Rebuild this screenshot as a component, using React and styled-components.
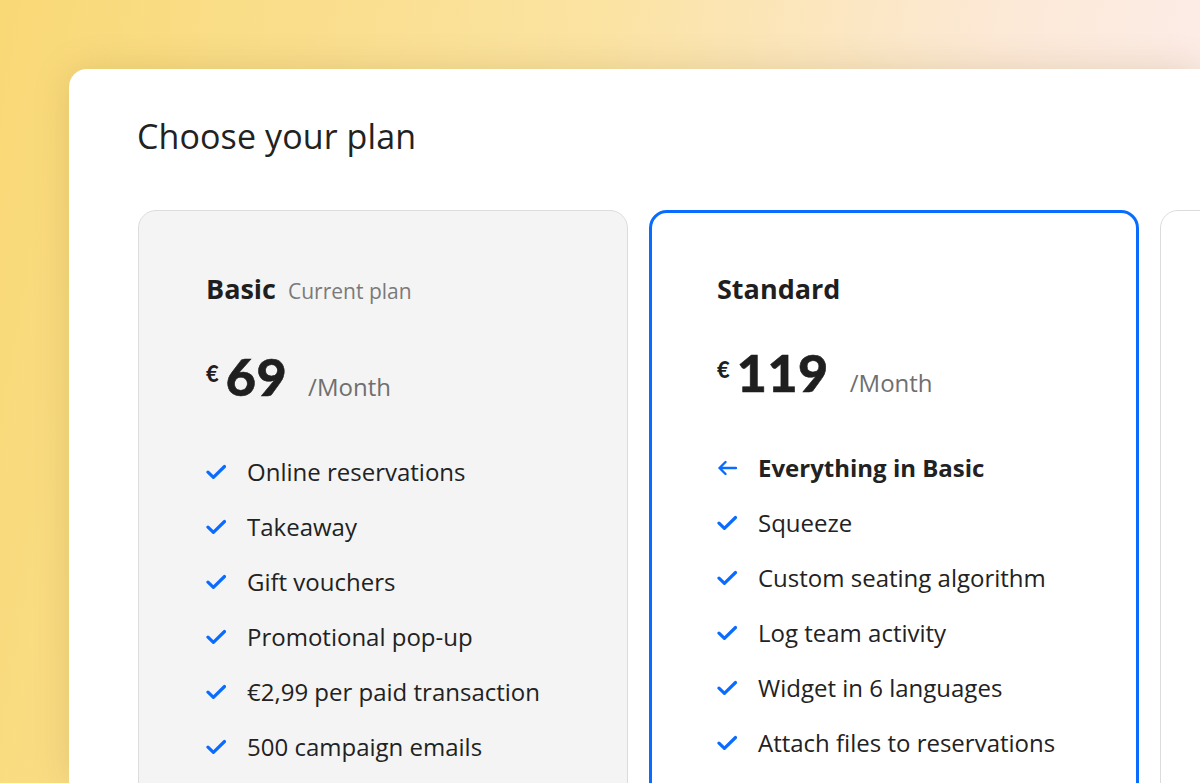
import React from "react";
import styled, { createGlobalStyle } from "styled-components";

const GlobalStyle = createGlobalStyle`
  html, body {
    margin: 0;
    padding: 0;
    height: 100%;
    overflow: hidden;
  }
  body {
    font-family: "Open Sans", "Liberation Sans", sans-serif;
    background: linear-gradient(100deg, #f9d976 0%, #fbe3a2 45%, #fce9d6 75%, #fdeef0 100%);
  }
`;

const Page = styled.div`
  padding: 69px 0 0 69px;
  height: 783px;
  box-sizing: border-box;
`;

const Panel = styled.div`
  background: #ffffff;
  border-radius: 18px 0 0 0;
  box-shadow: 0 0 36px rgba(120, 90, 20, 0.18);
  padding: 44px 0 0 69px;
  height: 100%;
  box-sizing: border-box;
  overflow: hidden;
`;

const Title = styled.h1`
  margin: 0 0 0 -1px;
  font-size: 34px;
  font-weight: 400;
  line-height: 46px;
  color: #222222;
  letter-spacing: 0.1px;
`;

const Cards = styled.div`
  display: flex;
  gap: 21px;
  margin-top: 51px;
`;

const Card = styled.div`
  flex: 0 0 auto;
  width: 490px;
  height: 620px;
  box-sizing: border-box;
  border-radius: 18px;
  border: ${(p) => (p.$selected ? "3px solid #0a6cff" : "1px solid #dcdcdc")};
  background: ${(p) => (p.$muted ? "#f4f4f4" : "#ffffff")};
  padding: ${(p) => (p.$selected ? "59px 65px" : "61px 67px")};
`;

const Header = styled.div`
  display: flex;
  align-items: baseline;
  gap: 12px;
  height: 34px;
`;

const PlanName = styled.span`
  font-size: 27px;
  font-weight: 700;
  color: #1f1f1f;
  line-height: 34px;
`;

const Tag = styled.span`
  font-size: 21px;
  color: #7a7a7a;
  line-height: 34px;
`;

const Price = styled.div`
  display: flex;
  align-items: baseline;
  margin-top: ${(p) => (p.$shift ? "36px" : "40px")};
  height: 60px;
`;

const Currency = styled.span`
  font-family: "Lato", "Liberation Sans", sans-serif;
  font-weight: 900;
  font-size: 22px;
  color: #1f1f1f;
  align-self: flex-start;
  margin-top: 14px;
  margin-right: 7px;
`;

const Amount = styled.span`
  font-family: "Lato", "Liberation Sans", sans-serif;
  font-weight: 900;
  font-size: 52px;
  color: #1f1f1f;
  line-height: 60px;
  letter-spacing: 0.5px;
  -webkit-text-stroke: 0.6px #1f1f1f;
`;

const Period = styled.span`
  font-size: 24px;
  color: #6f6f6f;
  margin-left: 21px;
`;

const Features = styled.ul`
  list-style: none;
  margin: 38px 0 0;
  padding: 0;
`;

const Feature = styled.li`
  display: flex;
  align-items: center;
  gap: 21px;
  height: 55px;
  font-size: 24px;
  color: #222222;
  font-weight: ${(p) => (p.$bold ? 700 : 400)};
`;

const IconBox = styled.span`
  width: 20px;
  height: 16px;
  display: flex;
  flex: 0 0 auto;
  color: #0a6cff;
`;

const Check = () => (
  <IconBox>
    <svg width="20" height="16" viewBox="0 0 20 16" fill="none">
      <path d="M2 8.2l5.4 5.2L18.5 2.5" stroke="currentColor" strokeWidth="3.2" strokeLinecap="round" strokeLinejoin="round" />
    </svg>
  </IconBox>
);

const Back = () => (
  <IconBox>
    <svg width="20" height="16" viewBox="0 0 20 16" fill="none">
      <path d="M19 8H2.5M8.5 2L2.5 8l6 6" stroke="currentColor" strokeWidth="2.4" strokeLinecap="round" strokeLinejoin="round" />
    </svg>
  </IconBox>
);

const plans = [
  {
    name: "Basic",
    tag: "Current plan",
    price: "69",
    muted: true,
    features: [
      "Online reservations",
      "Takeaway",
      "Gift vouchers",
      "Promotional pop-up",
      "€2,99 per paid transaction",
      "500 campaign emails",
    ],
  },
  {
    name: "Standard",
    price: "119",
    selected: true,
    lead: "Everything in Basic",
    features: [
      "Squeeze",
      "Custom seating algorithm",
      "Log team activity",
      "Widget in 6 languages",
      "Attach files to reservations",
    ],
  },
  {
    name: "Premium",
    price: "169",
    lead: "Everything in Standard",
    features: [],
  },
];

export default function App() {
  return (
    <>
      <GlobalStyle />
      <Page>
        <Panel>
          <Title>Choose your plan</Title>
          <Cards>
            {plans.map((plan) => (
              <Card key={plan.name} $muted={plan.muted} $selected={plan.selected}>
                <Header>
                  <PlanName>{plan.name}</PlanName>
                  {plan.tag && <Tag>{plan.tag}</Tag>}
                </Header>
                <Price $shift={!plan.tag}>
                  <Currency>€</Currency>
                  <Amount>{plan.price}</Amount>
                  <Period>/Month</Period>
                </Price>
                <Features>
                  {plan.lead && (
                    <Feature $bold>
                      <Back />
                      {plan.lead}
                    </Feature>
                  )}
                  {plan.features.map((f) => (
                    <Feature key={f}>
                      <Check />
                      {f}
                    </Feature>
                  ))}
                </Features>
              </Card>
            ))}
          </Cards>
        </Panel>
      </Page>
    </>
  );
}
